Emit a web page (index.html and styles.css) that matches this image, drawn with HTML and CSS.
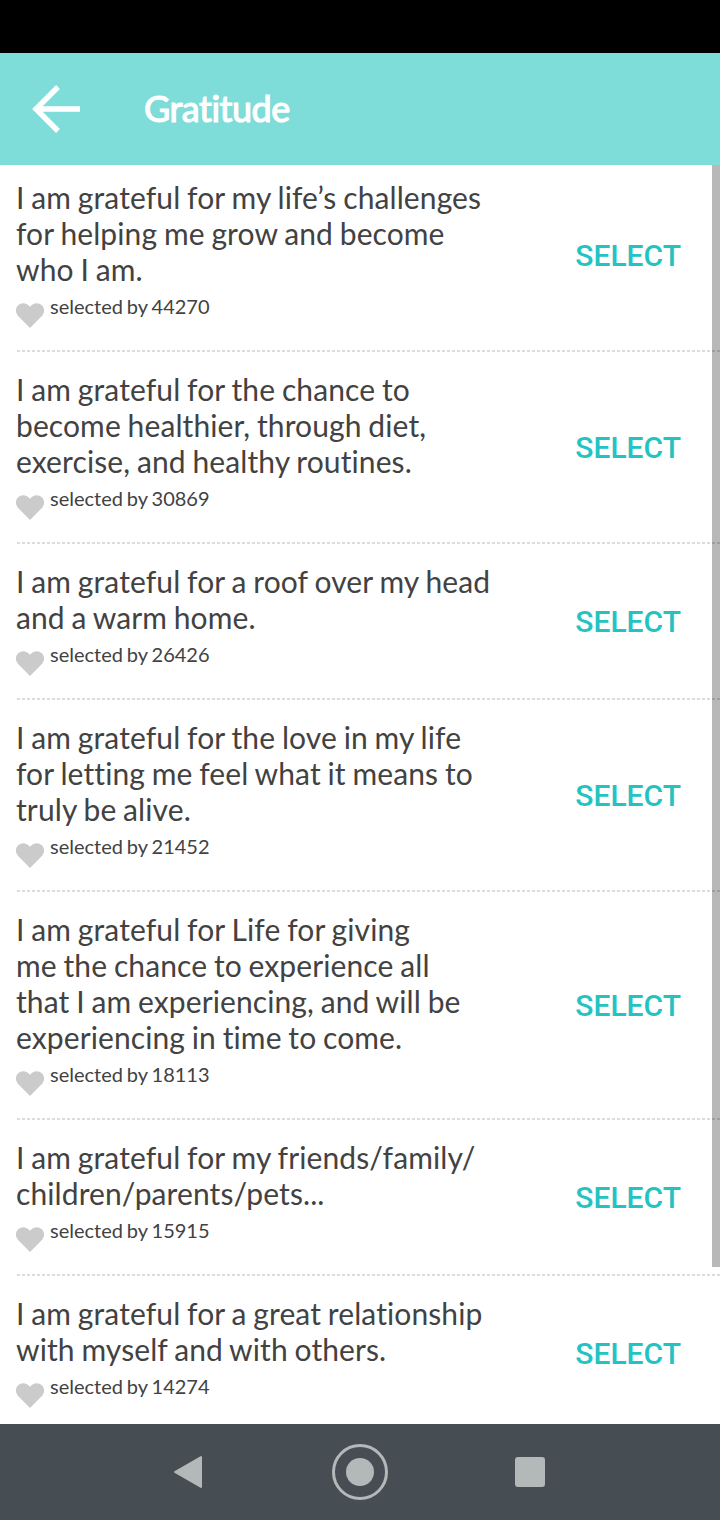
FILE: index.html
```html
<!DOCTYPE html>
<html lang="en">
<head>
  <meta charset="UTF-8">
  <title>Gratitude</title>
  <meta name="viewport" content="width=device-width, initial-scale=1.0">
  <link rel="stylesheet" href="styles.css">
</head>
<body>
  <svg class="sprite" aria-hidden="true">
    <symbol id="heart" viewBox="0 0 28 25">
      <path d="M14 25 L2.3 13.2 C-0.8 10 -0.8 5 2.2 2.2 C5.4 -0.8 10.8 -0.6 14 3.8 C17.2 -0.6 22.6 -0.8 25.8 2.2 C28.8 5 28.8 10 25.7 13.2 Z"/>
    </symbol>
  </svg>

  <div class="status-bar"></div>

  <header class="header">
    <button class="back" aria-label="Back">
      <svg width="50" height="50" viewBox="0 0 50 50">
        <path d="M27 3 L5 25 L27 47 M5 25 H49"/>
      </svg>
    </button>
    <h1>Gratitude</h1>
  </header>

  <main class="content">
    <ul class="list">
      <li class="item">
        <div class="info">
          <p class="text">I am grateful for my life’s challenges<br>for helping me grow and become<br>who I am.</p>
          <p class="count"><svg class="heart"><use href="#heart"/></svg>selected by 44270</p>
        </div>
        <button class="select">SELECT</button>
      </li>
      <li class="item">
        <div class="info">
          <p class="text">I am grateful for the chance to<br>become healthier, through diet,<br>exercise, and healthy routines.</p>
          <p class="count"><svg class="heart"><use href="#heart"/></svg>selected by 30869</p>
        </div>
        <button class="select">SELECT</button>
      </li>
      <li class="item">
        <div class="info">
          <p class="text">I am grateful for a roof over my head<br>and a warm home.</p>
          <p class="count"><svg class="heart"><use href="#heart"/></svg>selected by 26426</p>
        </div>
        <button class="select">SELECT</button>
      </li>
      <li class="item">
        <div class="info">
          <p class="text">I am grateful for the love in my life<br>for letting me feel what it means to<br>truly be alive.</p>
          <p class="count"><svg class="heart"><use href="#heart"/></svg>selected by 21452</p>
        </div>
        <button class="select">SELECT</button>
      </li>
      <li class="item">
        <div class="info">
          <p class="text">I am grateful for Life for giving<br>me the chance to experience all<br>that I am experiencing, and will be<br>experiencing in time to come.</p>
          <p class="count"><svg class="heart"><use href="#heart"/></svg>selected by 18113</p>
        </div>
        <button class="select">SELECT</button>
      </li>
      <li class="item">
        <div class="info">
          <p class="text">I am grateful for my friends/family/<br>children/parents/pets...</p>
          <p class="count"><svg class="heart"><use href="#heart"/></svg>selected by 15915</p>
        </div>
        <button class="select">SELECT</button>
      </li>
      <li class="item">
        <div class="info">
          <p class="text">I am grateful for a great relationship<br>with myself and with others.</p>
          <p class="count"><svg class="heart"><use href="#heart"/></svg>selected by 14274</p>
        </div>
        <button class="select">SELECT</button>
      </li>
    </ul>
    <div class="scrollbar"></div>
  </main>

  <nav class="nav-bar">
    <svg width="60" height="60" viewBox="0 0 60 60">
      <path class="solid" d="M15 30 L41 15 V45 Z"/>
    </svg>
    <svg width="60" height="60" viewBox="0 0 60 60">
      <circle class="ring" cx="30" cy="30" r="26.5"/>
      <circle class="dot" cx="30" cy="30" r="14"/>
    </svg>
    <svg width="60" height="60" viewBox="0 0 60 60">
      <rect class="dot" x="15" y="15" width="30" height="30" rx="3"/>
    </svg>
  </nav>
</body>
</html>
```

FILE: styles.css
```css
* { box-sizing: border-box; margin: 0; padding: 0; }
body {
  width: 720px;
  height: 1520px;
  display: flex;
  flex-direction: column;
  overflow: hidden;
  font-family: Lato, sans-serif;
  font-variant-ligatures: none;
  background-color: #ffffff;
  color: #424242;
}
button {
  border: none;
  background: none;
  cursor: pointer;
}
.sprite { display: none; }
.status-bar {
  flex: none;
  height: 53px;
  background-color: #000;
}

/* Header */
.header {
  flex: none;
  height: 112px;
  padding-left: 31px;
  display: flex;
  align-items: center;
  gap: 63px;
  background-color: #7edcd9;
  color: #fff;
}
.back svg {
  display: block;
  fill: none;
  stroke: #fff;
  stroke-width: 5.5;
}
h1 {
  font-size: 36px;
  font-weight: normal;
  line-height: 44px;
  letter-spacing: -0.5px;
  padding-bottom: 2px;
  -webkit-text-stroke: 1.2px #fff;
}

/* List, slightly scrolled under the header */
.content {
  position: relative;
  flex: 1;
  min-height: 0;
  overflow: hidden;
}
.list {
  list-style: none;
  margin-top: -5px;
}
.item {
  display: flex;
  align-items: center;
  justify-content: space-between;
  padding: 0 39px 0 16px;
  background: repeating-linear-gradient(90deg, #dcdcdc 0 3px, transparent 3px 5px) 17px 100% / 100% 2px no-repeat;
}
.info {
  padding: 19px 0 29px;
}
.text {
  font-size: 30px;
  line-height: 36px;
  letter-spacing: 0.1px;
  word-spacing: -1px;
  white-space: nowrap;
}
.count {
  height: 36px;
  display: flex;
  gap: 6px;
  font-size: 20px;
  line-height: 39px;
  word-spacing: -1.2px;
}
.heart {
  width: 28px;
  height: 25px;
  margin-top: 16px;
  fill: #cbcbcb;
}
.select {
  font-family: Roboto, sans-serif;
  font-size: 30px;
  font-weight: 500;
  line-height: 36px;
  color: #24c3c3;
}
.scrollbar {
  position: absolute;
  top: 0;
  right: 0;
  width: 8px;
  height: 1102px;
  background-color: rgba(0,0,0,0.28);
}

/* Android navigation */
.nav-bar {
  flex: none;
  height: 96px;
  display: flex;
  align-items: center;
  justify-content: center;
  gap: 110px;
  background-color: #464d53;
}
.solid {
  fill: #b3b8b9;
  stroke: #b3b8b9;
  stroke-width: 2;
  stroke-linejoin: round;
}
.dot { fill: #b3b8b9; }
.ring {
  fill: none;
  stroke: #b3b8b9;
  stroke-width: 3;
}
```
